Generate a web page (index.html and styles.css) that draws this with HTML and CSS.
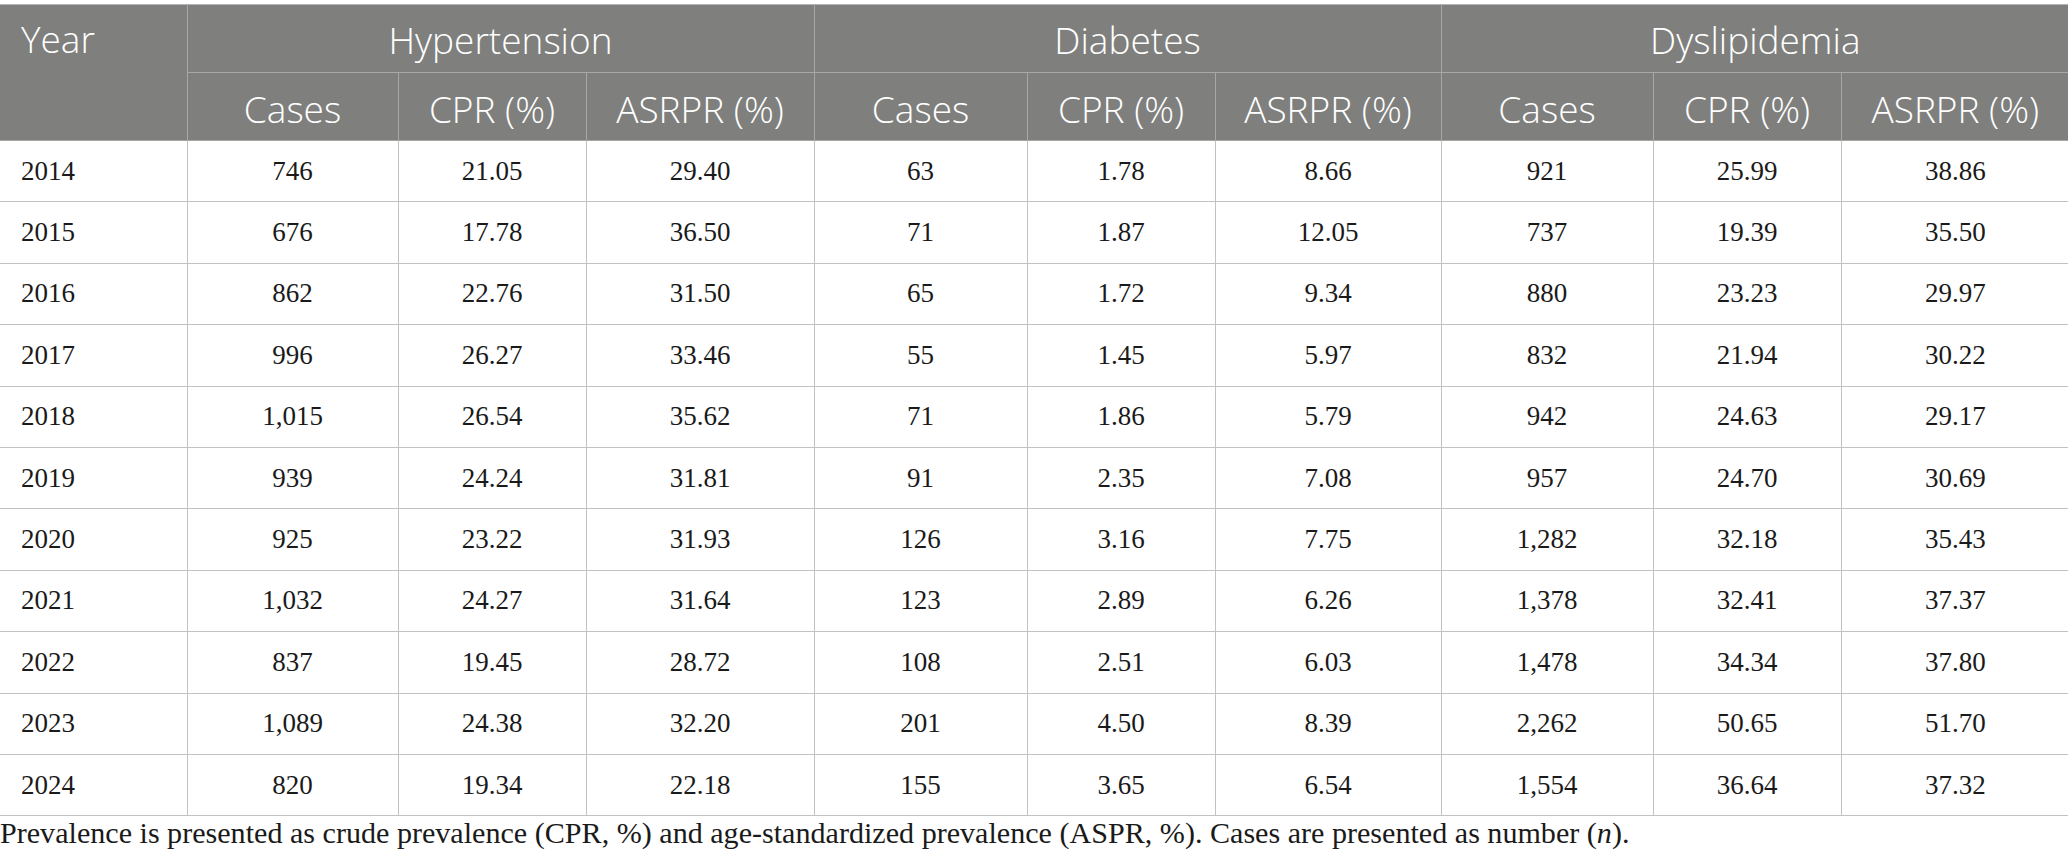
FILE: index.html
```html
<!DOCTYPE html>
<html lang="en">
<head>
<meta charset="utf-8">
<title>Prevalence table</title>
<link rel="stylesheet" href="styles.css">
</head>
<body>
<div class="wrap">
<table class="data">
  <colgroup>
    <col class="c-year">
    <col class="c-cases"><col class="c-cpr"><col class="c-asr">
    <col class="c-cases2"><col class="c-cpr"><col class="c-asr2">
    <col class="c-cases3"><col class="c-cpr"><col class="c-asr">
  </colgroup>
  <thead>
    <tr class="h1">
      <th class="year" rowspan="2">Year</th>
      <th colspan="3">Hypertension</th>
      <th colspan="3">Diabetes</th>
      <th colspan="3">Dyslipidemia</th>
    </tr>
    <tr class="h2">
      <th>Cases</th><th>CPR (%)</th><th>ASRPR (%)</th>
      <th>Cases</th><th>CPR (%)</th><th>ASRPR (%)</th>
      <th>Cases</th><th>CPR (%)</th><th>ASRPR (%)</th>
    </tr>
  </thead>
  <tbody>
    <tr><td class="yr">2014</td><td>746</td><td>21.05</td><td>29.40</td><td>63</td><td>1.78</td><td>8.66</td><td>921</td><td>25.99</td><td>38.86</td></tr>
    <tr><td class="yr">2015</td><td>676</td><td>17.78</td><td>36.50</td><td>71</td><td>1.87</td><td>12.05</td><td>737</td><td>19.39</td><td>35.50</td></tr>
    <tr><td class="yr">2016</td><td>862</td><td>22.76</td><td>31.50</td><td>65</td><td>1.72</td><td>9.34</td><td>880</td><td>23.23</td><td>29.97</td></tr>
    <tr><td class="yr">2017</td><td>996</td><td>26.27</td><td>33.46</td><td>55</td><td>1.45</td><td>5.97</td><td>832</td><td>21.94</td><td>30.22</td></tr>
    <tr><td class="yr">2018</td><td>1,015</td><td>26.54</td><td>35.62</td><td>71</td><td>1.86</td><td>5.79</td><td>942</td><td>24.63</td><td>29.17</td></tr>
    <tr><td class="yr">2019</td><td>939</td><td>24.24</td><td>31.81</td><td>91</td><td>2.35</td><td>7.08</td><td>957</td><td>24.70</td><td>30.69</td></tr>
    <tr><td class="yr">2020</td><td>925</td><td>23.22</td><td>31.93</td><td>126</td><td>3.16</td><td>7.75</td><td>1,282</td><td>32.18</td><td>35.43</td></tr>
    <tr><td class="yr">2021</td><td>1,032</td><td>24.27</td><td>31.64</td><td>123</td><td>2.89</td><td>6.26</td><td>1,378</td><td>32.41</td><td>37.37</td></tr>
    <tr><td class="yr">2022</td><td>837</td><td>19.45</td><td>28.72</td><td>108</td><td>2.51</td><td>6.03</td><td>1,478</td><td>34.34</td><td>37.80</td></tr>
    <tr><td class="yr">2023</td><td>1,089</td><td>24.38</td><td>32.20</td><td>201</td><td>4.50</td><td>8.39</td><td>2,262</td><td>50.65</td><td>51.70</td></tr>
    <tr><td class="yr">2024</td><td>820</td><td>19.34</td><td>22.18</td><td>155</td><td>3.65</td><td>6.54</td><td>1,554</td><td>36.64</td><td>37.32</td></tr>
  </tbody>
</table>
<p class="note">Prevalence is presented as crude prevalence (CPR, %) and age-standardized prevalence (ASPR, %). Cases are presented as number (<i>n</i>).</p>
</div>
</body>
</html>
```

FILE: styles.css
```css
html, body {
  margin: 0;
  padding: 0;
  background: #ffffff;
}

.wrap {
  padding-top: 4px;
}

.data {
  width: 2068px;
  border-collapse: collapse;
  table-layout: fixed;
  font-family: "Liberation Serif", "Times New Roman", serif;
  color: #1a1a1a;
}

.c-year { width: 187px; }
.c-cases { width: 211px; }
.c-cpr { width: 188px; }
.c-asr { width: 228px; }
.c-cases2 { width: 213px; }
.c-asr2 { width: 226px; }
.c-cases3 { width: 212px; }

.data th {
  background: #7f807e;
  color: #ffffff;
  font-family: "Open Sans", "Noto Sans", sans-serif;
  font-weight: 300;
  font-size: 37px;
  text-align: center;
  border: 1px solid #a7a8a6;
  padding: 0 6px;
  white-space: nowrap;
}

.data tr.h1 th {
  height: 65px;
  padding-top: 2px;
}

.data tr.h2 th {
  height: 63px;
  padding-top: 4px;
}

.data tr.h1 th.year {
  height: auto;
  text-align: left;
  vertical-align: top;
  padding-left: 21px;
  padding-top: 8px;
}

.data thead tr:first-child th {
  border-top: 1px solid #b5b5b5;
}

.data th:first-child,
.data td:first-child {
  border-left: none;
}

.data th:last-child,
.data td:last-child {
  border-right: none;
}

.data td {
  height: 60.4px;
  padding: 0 8px;
  border: 1px solid #c2c2c2;
  font-size: 27px;
  text-align: center;
  vertical-align: middle;
}

.data td.yr {
  text-align: left;
  padding-left: 21px;
}

.note {
  margin: 0;
  padding-top: 0;
  font-family: "Liberation Serif", "Times New Roman", serif;
  font-size: 30.1px;
  line-height: 34px;
  color: #1a1a1a;
  white-space: nowrap;
}
```
